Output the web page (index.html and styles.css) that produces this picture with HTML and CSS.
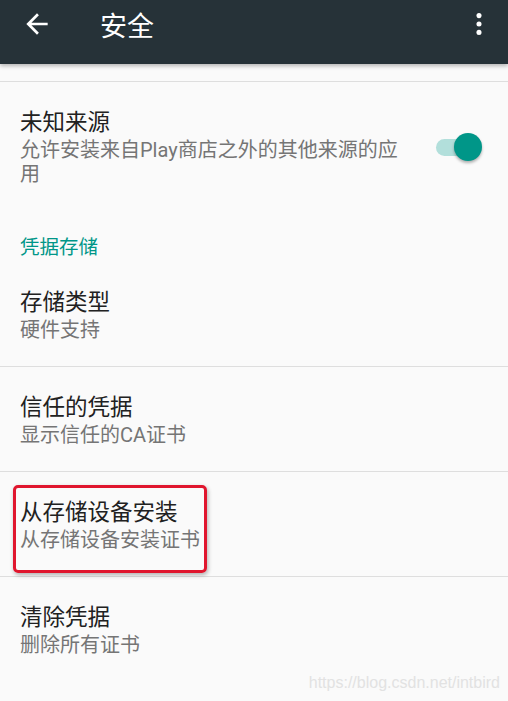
FILE: index.html
```html
<!DOCTYPE html>
<html lang="zh-CN">

<head>
    <meta charset="UTF-8">
    <meta name="viewport" content="width=device-width, initial-scale=1.0">
    <title>安全</title>
    <link rel="stylesheet" href="styles.css">
</head>

<body>
    <div class="appbar">
        <svg class="back" width="32" height="32" viewBox="0 0 24 24">
            <path d="M20 11H7.83l5.59-5.59L12 4l-8 8 8 8 1.41-1.41L7.83 13H20v-2z" fill="#fff" />
        </svg>
        <div class="appbar-title">安全</div>
        <svg class="more" width="32" height="32" viewBox="0 0 24 24">
            <circle cx="12" cy="5.7" r="1.9" fill="#fff" />
            <circle cx="12" cy="12" r="1.9" fill="#fff" />
            <circle cx="12" cy="18.3" r="1.9" fill="#fff" />
        </svg>
    </div>

    <div class="list">
        <div class="spacer"></div>

        <div class="pref pref-switch">
            <div class="pref-text">
                <div class="pref-title">未知来源</div>
                <div class="pref-summary">允许安装来自Play商店之外的其他来源的应用</div>
            </div>
            <div class="switch">
                <div class="track"></div>
                <div class="thumb"></div>
            </div>
        </div>

        <div class="category">凭据存储</div>

        <div class="pref first">
            <div class="pref-title">存储类型</div>
            <div class="pref-summary">硬件支持</div>
        </div>
        <div class="pref">
            <div class="pref-title">信任的凭据</div>
            <div class="pref-summary">显示信任的CA证书</div>
        </div>
        <div class="pref marked">
            <div class="pref-title">从存储设备安装</div>
            <div class="pref-summary">从存储设备安装证书</div>
            <div class="mark"></div>
        </div>
        <div class="pref last">
            <div class="pref-title">清除凭据</div>
            <div class="pref-summary">删除所有证书</div>
        </div>
    </div>

    <div class="watermark">https://blog.csdn.net/intbird</div>
</body>
</html>
```

FILE: styles.css
```css
body {
    margin: 0;
    width: 508px;
    height: 701px;
    overflow: hidden;
    position: relative;
    background-color: #fafafa;
    font-family: Roboto, "Noto Sans CJK SC", sans-serif;
}

.appbar {
    position: relative;
    z-index: 1;
    display: flex;
    align-items: center;
    height: 64px;
    box-sizing: border-box;
    padding: 0 13px 17px 21px;
    background-color: #263238;
    box-shadow: 0 2px 4px rgba(0, 0, 0, 0.28);
}

.appbar-title {
    margin-left: 47px;
    margin-top: 2px;
    color: #fff;
    font-size: 27px;
}

.more {
    margin-left: auto;
}

.spacer {
    height: 17px;
    border-bottom: 1px solid #dedede;
}

.pref {
    position: relative;
    padding: 25px 21px 24px 20px;
    border-bottom: 1px solid #dedede;
}

.pref-switch {
    display: flex;
    border-bottom: none;
    padding-bottom: 28px;
}

.pref-text {
    width: 393px;
}

.pref-title {
    color: #212121;
    font-size: 22.5px;
    line-height: 30px;
}

.pref-summary {
    color: #757575;
    font-size: 20px;
    line-height: 24px;
    margin-top: 1px;
}

.category {
    padding: 22px 21px 2px 20px;
    color: #009688;
    font-size: 19.5px;
    line-height: 24px;
}

.pref.first {
    padding-top: 25px;
}

.pref.last {
    border-bottom: none;
}

.switch {
    position: relative;
    width: 46px;
    height: 28px;
    margin: 26px 5px 0 auto;
}

.track {
    position: absolute;
    left: 0;
    top: 6px;
    width: 40px;
    height: 17px;
    border-radius: 9px;
    background-color: #b2dfdb;
}

.thumb {
    position: absolute;
    right: 0;
    top: 0;
    width: 28px;
    height: 28px;
    border-radius: 50%;
    background-color: #009688;
    box-shadow: 0 2px 3px rgba(0, 0, 0, 0.3);
}

.mark {
    position: absolute;
    left: 13px;
    top: 13px;
    width: 188px;
    height: 82px;
    border: 3px solid #e0162e;
    border-radius: 5px;
    box-shadow: 1px 2px 4px rgba(0, 0, 0, 0.3);
}

.watermark {
    position: absolute;
    right: 8px;
    bottom: 9px;
    color: #e2e2e2;
    font-family: "Liberation Sans", sans-serif;
    font-size: 16px;
}
```
